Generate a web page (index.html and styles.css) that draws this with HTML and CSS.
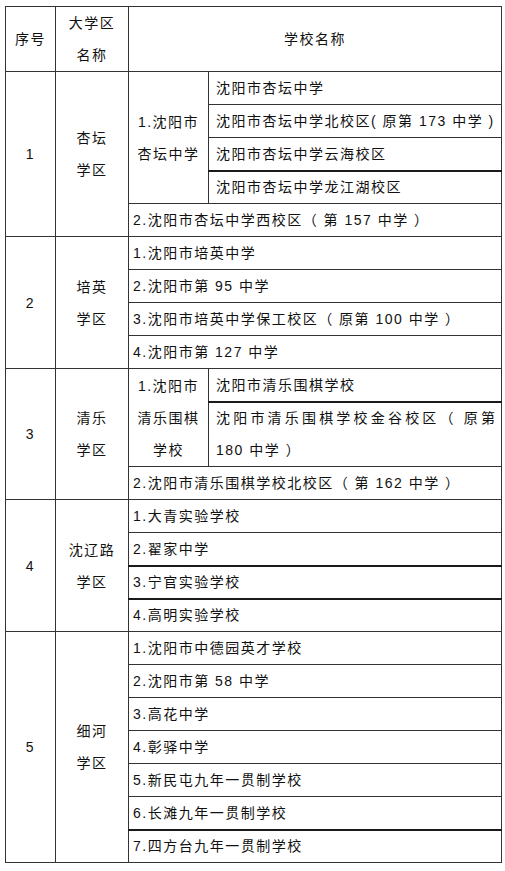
FILE: index.html
```html
<!DOCTYPE html>
<html lang="zh-CN">
<head>
<meta charset="utf-8">
<title>大学区学校名称</title>
<link rel="stylesheet" href="styles.css">
</head>
<body>
<table class="schools">
  <colgroup>
    <col class="c-no">
    <col class="c-area">
    <col class="c-group">
    <col class="c-name">
  </colgroup>
  <thead>
    <tr>
      <th>序号</th>
      <th>大学区<br>名称</th>
      <th colspan="2">学校名称</th>
    </tr>
  </thead>
  <tbody>
    <tr>
      <td rowspan="5" class="ctr">1</td>
      <td rowspan="5" class="ctr">杏坛<br>学区</td>
      <td rowspan="4" class="ctr">1.沈阳市<br>杏坛中学</td>
      <td class="sub">沈阳市杏坛中学</td>
    </tr>
    <tr><td class="sub">沈阳市杏坛中学北校区( 原第 173 中学 )</td></tr>
    <tr><td class="sub">沈阳市杏坛中学云海校区</td></tr>
    <tr><td class="sub thick">沈阳市杏坛中学龙江湖校区</td></tr>
    <tr><td colspan="2" class="item">2.沈阳市杏坛中学西校区（ 第 157 中学 ）</td></tr>

    <tr>
      <td rowspan="4" class="ctr">2</td>
      <td rowspan="4" class="ctr">培英<br>学区</td>
      <td colspan="2" class="item">1.沈阳市培英中学</td>
    </tr>
    <tr><td colspan="2" class="item">2.沈阳市第 95 中学</td></tr>
    <tr><td colspan="2" class="item">3.沈阳市培英中学保工校区（ 原第 100 中学 ）</td></tr>
    <tr><td colspan="2" class="item">4.沈阳市第 127 中学</td></tr>

    <tr>
      <td rowspan="3" class="ctr">3</td>
      <td rowspan="3" class="ctr">清乐<br>学区</td>
      <td rowspan="2" class="ctr">1.沈阳市<br>清乐围棋<br>学校</td>
      <td class="sub">沈阳市清乐围棋学校</td>
    </tr>
    <tr><td class="sub thick-wrap"><span class="just">沈阳市清乐围棋学校金谷校区（ 原第</span>180 中学 ）</td></tr>
    <tr><td colspan="2" class="item">2.沈阳市清乐围棋学校北校区（ 第 162 中学 ）</td></tr>

    <tr>
      <td rowspan="4" class="ctr">4</td>
      <td rowspan="4" class="ctr">沈辽路<br>学区</td>
      <td colspan="2" class="item">1.大青实验学校</td>
    </tr>
    <tr><td colspan="2" class="item">2.翟家中学</td></tr>
    <tr><td colspan="2" class="item thick">3.宁官实验学校</td></tr>
    <tr><td colspan="2" class="item thick">4.高明实验学校</td></tr>

    <tr>
      <td rowspan="7" class="ctr">5</td>
      <td rowspan="7" class="ctr">细河<br>学区</td>
      <td colspan="2" class="item">1.沈阳市中德园英才学校</td>
    </tr>
    <tr><td colspan="2" class="item">2.沈阳市第 58 中学</td></tr>
    <tr><td colspan="2" class="item">3.高花中学</td></tr>
    <tr><td colspan="2" class="item">4.彰驿中学</td></tr>
    <tr><td colspan="2" class="item">5.新民屯九年一贯制学校</td></tr>
    <tr><td colspan="2" class="item">6.长滩九年一贯制学校</td></tr>
    <tr><td colspan="2" class="item thick">7.四方台九年一贯制学校</td></tr>
  </tbody>
</table>
</body>
</html>
```

FILE: styles.css
```css
html, body {
  margin: 0;
  padding: 0;
  background: #ffffff;
}

body {
  font-family: "Liberation Sans", "Noto Sans CJK SC", sans-serif;
  color: #111111;
}

.schools {
  border-collapse: collapse;
  table-layout: fixed;
  width: 496px;
  margin: 6px 0 0 5px;
  font-size: 14px;
  letter-spacing: 1.5px;
  line-height: 32px;
}

.c-no { width: 50px; }
.c-area { width: 73px; }
.c-group { width: 80px; }
.c-name { width: 293px; }

.schools th,
.schools td {
  border: 1px solid #333333;
  padding: 0;
  vertical-align: middle;
}

.schools th {
  font-weight: normal;
  text-align: center;
}

.schools td.ctr {
  text-align: center;
}

.schools td.sub {
  text-align: left;
  padding-left: 7px;
  padding-right: 6px;
}

.schools td.item {
  text-align: left;
  padding-left: 4px;
}

.schools td.thick,
.schools td.thick-wrap {
  border-top: 2px solid #1a1a1a;
}

.schools td.thick {
  line-height: 31px;
}

.schools td.thick-wrap {
  line-height: 31.5px;
}

.just {
  display: block;
  text-align: justify;
  text-align-last: justify;
  letter-spacing: 0;
}
```
